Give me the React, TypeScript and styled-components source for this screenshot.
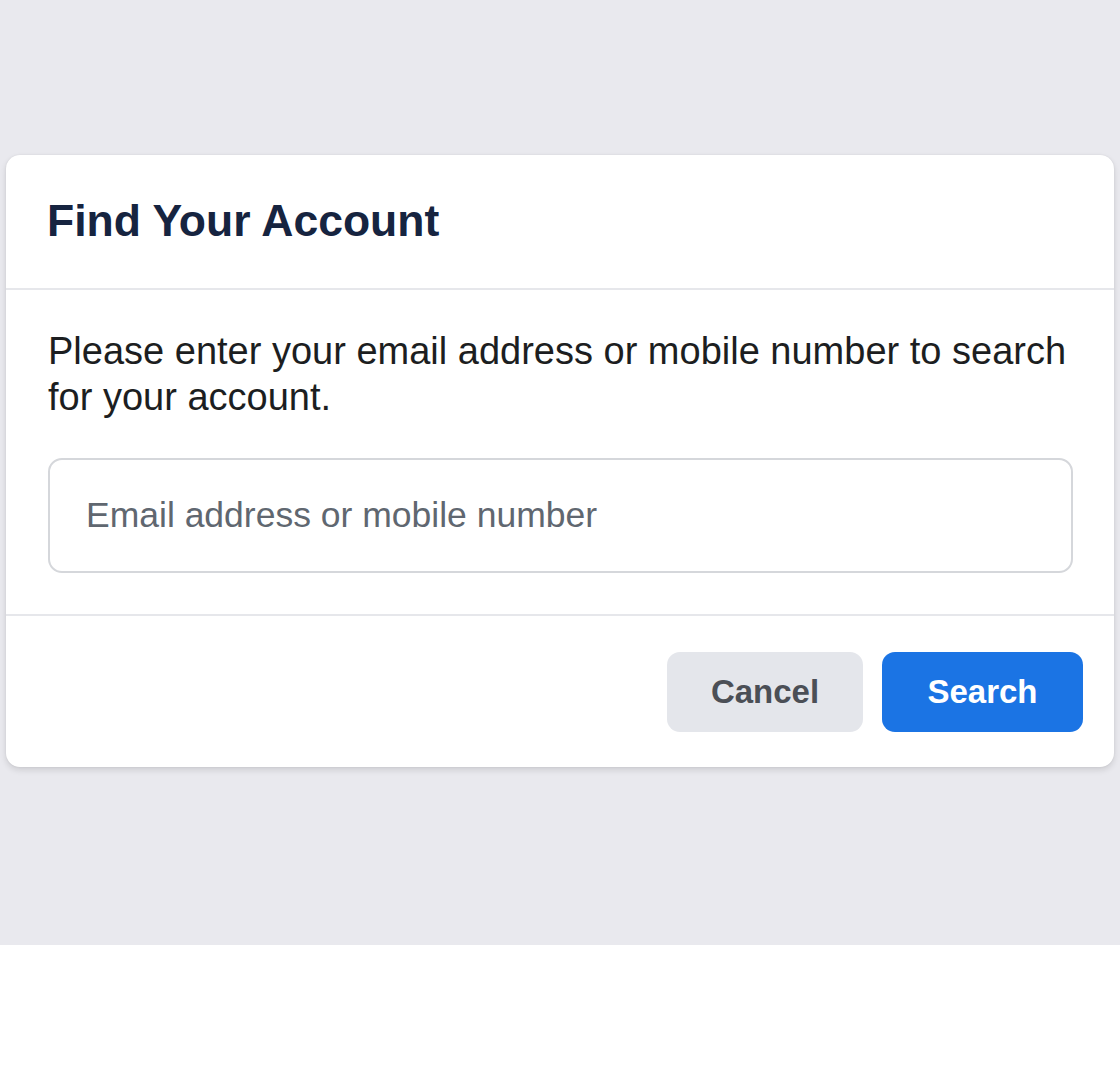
import styled, { createGlobalStyle } from "styled-components";

const GlobalStyle = createGlobalStyle`
  html, body {
    margin: 0;
    padding: 0;
    background: #ffffff;
  }
  body {
    font-family: "Liberation Sans", Arial, sans-serif;
  }
  * {
    box-sizing: border-box;
  }
`;

const App = () => {
  return (
    <>
      <GlobalStyle />
      <Backdrop>
        <Dialog>
          <Header>
            <Title>Find Your Account</Title>
          </Header>

          <Body>
            <Message>
              Please enter your email address or mobile number to search for
              your account.
            </Message>
            <Input type="text" placeholder="Email address or mobile number" />
          </Body>

          <Footer>
            <Button>Cancel</Button>
            <Button $primary>Search</Button>
          </Footer>
        </Dialog>
      </Backdrop>
    </>
  );
};

export default App;

const Backdrop = styled.div`
  height: 945px;
  background-color: #e9e9ee;
  display: flex;
  align-items: flex-start;
  padding: 155px 0 0 6px;
  box-shadow: 0 1px 3px rgba(0, 0, 0, 0.08);
`;

const Dialog = styled.div`
  width: 1108px;
  background-color: #fff;
  border-radius: 14px;
  box-shadow: 0 3px 6px rgba(0, 0, 0, 0.12), 0 0 2px rgba(0, 0, 0, 0.08);
  display: flex;
  flex-direction: column;
`;

const Header = styled.div`
  padding: 39px 41px 41px;
  border-bottom: 2px solid #e6e7eb;
`;

const Title = styled.h2`
  margin: 0;
  color: #162440;
  font-size: 44.5px;
  font-weight: 700;
  line-height: 53px;
`;

const Body = styled.div`
  padding: 38px 30px 41px 42px;
  display: flex;
  flex-direction: column;
  gap: 38px;
  border-bottom: 2px solid #e6e7eb;
`;

const Message = styled.p`
  margin: 0;
  color: #1c1e21;
  font-size: 38px;
  line-height: 46px;
`;

const Input = styled.input`
  width: calc(100% - 11px);
  height: 115px;
  border: 2px solid #d5d7db;
  border-radius: 14px;
  padding: 0 36px;
  font-family: "Liberation Sans", Arial, sans-serif;
  font-size: 35.5px;
  color: #1c1e21;
  outline: none;

  &::placeholder {
    color: #606770;
  }
`;

const Footer = styled.div`
  display: flex;
  justify-content: flex-end;
  gap: 19px;
  padding: 36px 31px 35px;
`;

const Button = styled.button<{ $primary?: boolean }>`
  height: 80px;
  min-width: ${({ $primary }) => ($primary ? "201px" : "196px")};
  padding: 0 40px;
  border: none;
  border-radius: 13px;
  font-family: "Liberation Sans", Arial, sans-serif;
  font-size: 33px;
  font-weight: 700;
  cursor: pointer;
  background-color: ${({ $primary }) => ($primary ? "#1b74e4" : "#e4e6eb")};
  color: ${({ $primary }) => ($primary ? "#ffffff" : "#4b4f56")};
`;
